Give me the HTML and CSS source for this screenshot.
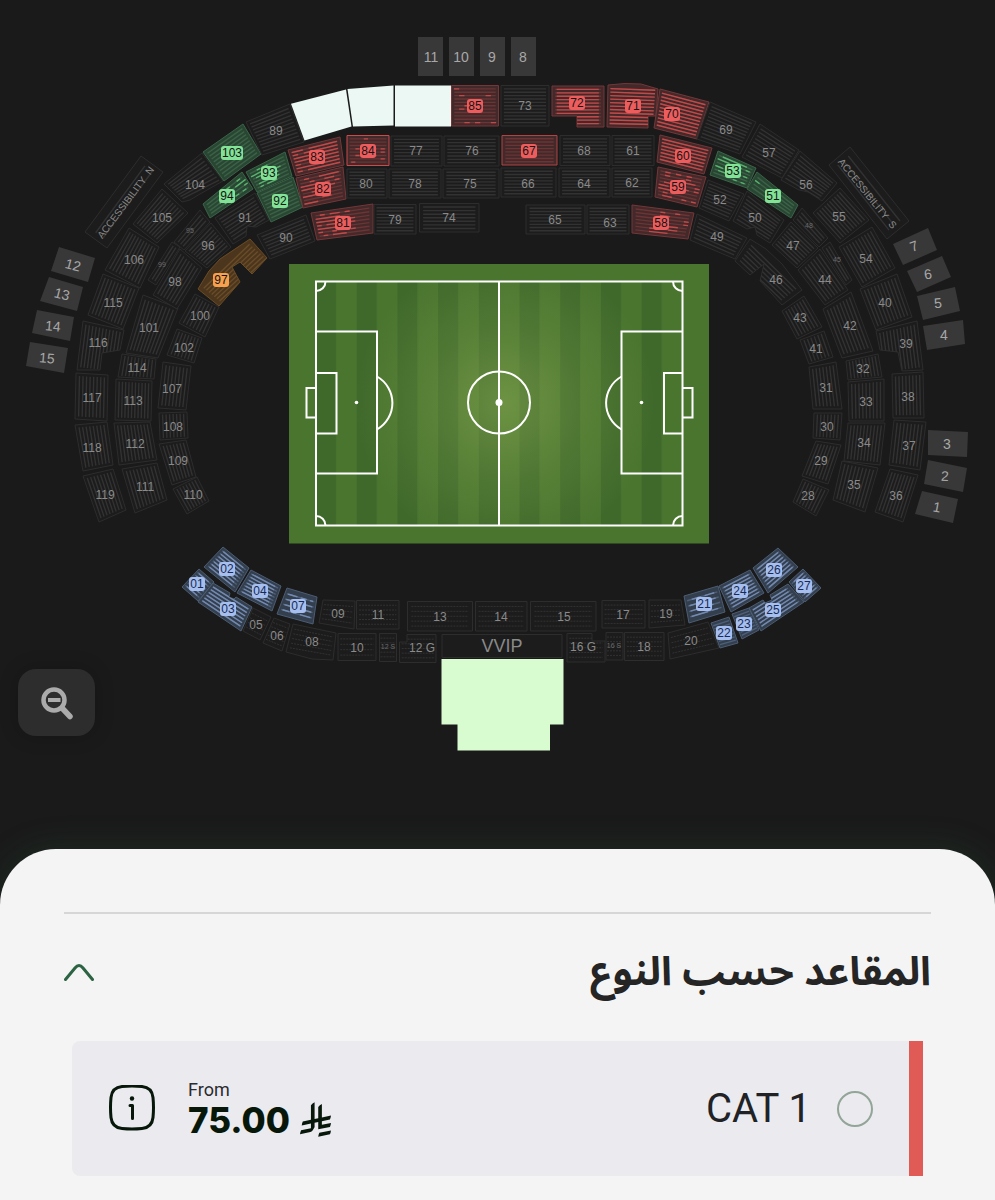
FILE: index.html
```html
<!DOCTYPE html>
<html lang="ar" dir="rtl">
<head>
  <meta charset="UTF-8" />
  <meta name="viewport" content="width=device-width, initial-scale=1.0"/>
  <title>المقاعد حسب النوع</title>
  <link rel="stylesheet" href="styles.css">
</head>
<body>
  <main>
    <div class="map-container">
      <svg class="stadium" viewBox="0 0 995 849" direction="ltr">
        <defs>
          <radialGradient id="fieldLight" gradientUnits="userSpaceOnUse" cx="505" cy="403" r="150">
            <stop offset="0" stop-color="#9dba5e" stop-opacity="0.42" />
            <stop offset="0.5" stop-color="#9dba5e" stop-opacity="0.18" />
            <stop offset="1" stop-color="#9dba5e" stop-opacity="0" />
          </radialGradient>
          <pattern id="grass" patternUnits="userSpaceOnUse" x="316" y="281" width="40.7" height="245">
            <rect width="20.35" height="245" fill="#3f692b" />
            <rect x="20.35" width="20.35" height="245" fill="#4a752f" />
          </pattern>
        </defs>

        <!-- pitch -->
        <rect x="289" y="264" width="420" height="279.5" fill="#4a752f" />
        <rect x="316" y="281.5" width="366.5" height="244" fill="url(#grass)" />
        <rect x="316" y="281.5" width="366.5" height="244" fill="url(#fieldLight)" />
        <g class="pitch-lines">
          <rect x="316" y="281.5" width="366.5" height="244" />
          <path d="M499 281.5V525.5" />
          <circle cx="499" cy="402.5" r="31" />
          <path d="M316 331.5H377V473.5H316M316 373H336.5V433.5H316M316 388H306.5V417.5H316" />
          <path d="M682.5 331.5H621.5V473.5H682.5M682.5 373H664V433.5H682.5M682.5 388H692.5V417.5H682.5" />
          <path d="M377 376.5A30.5 30.5 0 0 1 377 429.5M621.5 376.5A30.5 30.5 0 0 0 621.5 429.5" />
          <path d="M325.5 281.5A9.5 9.5 0 0 1 316 291M673 281.5A9.5 9.5 0 0 0 682.5 291M325.5 525.5A9.5 9.5 0 0 0 316 516M673 525.5A9.5 9.5 0 0 1 682.5 516" />
        </g>
        <g fill="#fff">
          <circle cx="499" cy="402.5" r="3.5" />
          <circle cx="356.5" cy="402.5" r="1.8" />
          <circle cx="641.5" cy="402.5" r="1.8" />
        </g>

        <g id="blocks"></g>

        <path class="lounge" d="M441.5 659H563.5V724.5H550V750.5H457.5V724.5H441.5Z" />
      </svg>

      <button class="zoom-button" type="button" aria-label="تصغير">
        <svg width="36" height="36" viewBox="0 0 36 36" fill="none" stroke="#ababab">
          <circle cx="15" cy="15" r="10.5" stroke-width="4.5" />
          <path d="M9 15h12.5" stroke-width="4" />
          <path d="M23.5 23.5l7.5 8" stroke-width="5.5" stroke-linecap="round" />
        </svg>
      </button>
    </div>

    <section class="sheet">
      <hr class="divider">

      <button class="accordion" type="button" aria-expanded="true">
        <span class="accordion-title">المقاعد حسب النوع</span>
        <svg width="30" height="20" viewBox="0 0 30 20" fill="none" stroke="#2c6443" stroke-width="3" stroke-linecap="round" stroke-linejoin="round">
          <path d="M1.5 17.5L11 6q4-5 8 0L28.500 17.5" />
        </svg>
      </button>

      <div class="category">
        <input type="radio" name="category" id="cat1" />
        <label for="cat1">CAT 1</label>

        <div class="price" dir="ltr">
          <div class="price-from">From</div>
          <div class="price-value">
            <span>75.00</span>
            <svg width="31" height="35" viewBox="0 0 1124.14 1256.39" fill="#07180b">
              <path d="M699.62 1113.02c-20.06 44.48-33.32 92.75-38.4 143.37l424.51-90.24c20.06-44.47 33.31-92.75 38.4-143.37l-424.51 90.24Z" />
              <path d="M1085.73 895.8c20.06-44.47 33.32-92.75 38.4-143.37l-330.68 70.33v-135.2l292.27-62.11c20.06-44.47 33.32-92.75 38.4-143.37l-330.68 70.27V66.13c-50.67 28.45-95.67 66.32-132.25 110.99v403.35l-132.25 28.11V0c-50.67 28.44-95.67 66.32-132.25 110.99v525.69l-295.91 62.88c-20.06 44.47-33.33 92.75-38.42 143.37l334.33-71.05v170.26l-358.3 76.14c-20.06 44.47-33.32 92.75-38.4 143.37l375.04-79.7c30.53-6.35 56.77-24.4 73.83-49.24l68.78-101.97c7.14-10.57 11.3-23.29 11.3-36.99v-149.98l132.25-28.11v270.4l424.53-90.28Z" />
            </svg>
          </div>
        </div>

        <button class="info-button" type="button" aria-label="معلومات">
          <svg width="48" height="48" viewBox="0 0 48 48" fill="none" stroke="#07180b" stroke-width="3" stroke-linecap="round" stroke-linejoin="round">
            <path d="M14 1.5Q24 .5 34 1.5Q44 2.5 45 12.500Q46 22.500 45 32.500Q44 42.500 34 43.500Q24 44.500 14 43.500Q4 42.500 3 32.500Q2 22.500 3 12.500Q4 2.500 14 1.500Z" />
            <path d="M22 20.500H24.500V33.500" />
            <circle cx="24" cy="13.500" r="2.200" fill="#07180b" stroke="none" />
          </svg>
        </button>
      </div>
    </section>
  </main>
  <script src="map.js"></script>
</body>
</html>
```

FILE: styles.css
```css
body {
  font-family: Roboto, "DejaVu Sans", sans-serif;
  margin: 0;
  padding: 0;
  background: #1a1a1a;
}

.map-container {
  position: relative;
}

.stadium {
  display: block;
  width: 100%;
  font-family: "Liberation Sans", Arial, sans-serif;
}

.pitch-lines {
  fill: none;
  stroke: #fff;
  stroke-width: 2;
}

.lounge {
  fill: #d9fbd0;
}

/* seat blocks */
.block polygon {
  fill: #1c1c1c;
  stroke: #2d2d2d;
}

.block .rows {
  stroke: #323232;
  stroke-width: 1.4;
  fill: none;
}

.block .seats {
  fill: none;
  stroke: none;
  stroke-width: 1.4;
}

.block text {
  font-size: 12px;
  fill: #8a8a8a;
  text-anchor: middle;
  white-space: pre;
}

.block .text-tiny {
  font-size: 7px;
  fill: #6c6c6c;
}

.block .text-gate {
  font-size: 14px;
  fill: #a8a8a8;
}

.block .text-vvip {
  font-size: 18px;
}

.block .text-side {
  font-size: 10px;
}

.dotted .rows {
  stroke-dasharray: 2 1;
  stroke-width: 1;
}

.gate polygon {
  fill: #383838;
  stroke: none;
}

.blank polygon {
  fill: #ebf8f4;
  stroke: none;
}

.red polygon {
  fill: #43292a;
  stroke: #753638;
}

.red .rows {
  stroke: #6b3435;
}

.red .seats {
  stroke: #c04a4a;
}

.red .tag {
  fill: #ee5d5e;
}

.green polygon {
  fill: #294633;
  stroke: #3a6448;
}

.green .rows {
  stroke: #3b6147;
}

.green .seats {
  stroke: #58b16d;
}

.green .tag {
  fill: #82e397;
}

.orange polygon {
  fill: #4b361d;
  stroke: #6c4c25;
}

.orange .rows {
  stroke: #694c28;
}

.orange .tag {
  fill: #f8a04d;
}

.blue polygon {
  fill: #343f4e;
  stroke: #4b5c74;
}

.blue .rows {
  stroke: #4d5f79;
}

.blue .seats {
  stroke: #7389b0;
}

.blue .tag {
  fill: #a6bfef;
}

.block .tag + text {
  fill: #151515;
}

.blue .tag + text {
  fill: #182b55;
}

.zoom-button {
  position: absolute;
  left: 18px;
  bottom: 113px;
  display: flex;
  align-items: center;
  justify-content: center;
  width: 77px;
  height: 67px;
  padding: 0;
  border: none;
  border-radius: 18px;
  background: #2d2d2d;
  box-shadow: 0 0 20px rgba(0, 0, 0, 0.2);
  cursor: pointer;
}

/* bottom sheet */
.sheet {
  position: relative;
  padding: 63px 64px 24px;
  background: #f4f4f4;
  border-radius: 56px 56px 0 0;
  box-shadow: 0 0 32px rgba(40, 90, 60, 0.3);
}

.divider {
  height: 2px;
  margin: 0;
  border: none;
  background: #d6d6d6;
}

.accordion {
  display: flex;
  align-items: center;
  justify-content: space-between;
  width: 100%;
  height: 60px;
  margin: 28px 0 39px;
  padding: 0;
  border: none;
  background: none;
  color: #252525;
  cursor: pointer;
}

.accordion-title {
  font-family: "Noto Sans Arabic", "DejaVu Sans", sans-serif;
  font-size: 40px;
  font-weight: bold;
}

.category {
  display: flex;
  align-items: center;
  height: 135px;
  margin: 0 8px;
  padding: 0 36px;
  border-right: 14px solid #e05a56;
  border-radius: 8px 0 0 8px;
  background: #eaeaef;
}

.category input {
  appearance: none;
  width: 36px;
  height: 36px;
  margin: 0 0 0 26px;
  border: 2px solid #92a597;
  border-radius: 50%;
}

.category input:checked {
  background: #2c6443;
}

.category label {
  font-size: 40px;
  color: #202225;
}

.price {
  margin-right: auto;
  width: 144px;
  color: #07180b;
}

.price-from {
  font-size: 18px;
  line-height: 22px;
  color: #2b2b30;
}

.price-value {
  display: flex;
  align-items: center;
  gap: 10px;
  font-family: Inter, sans-serif;
  font-size: 35px;
  font-weight: 800;
  line-height: 38px;
}

.info-button {
  display: flex;
  margin-right: 32px;
  padding: 0;
  border: none;
  background: none;
  cursor: pointer;
}
```

FILE: map.js
```js
const SVG = "http://www.w3.org/2000/svg";

// rectangle as four corners
function box(x1, y1, x2, y2) {
  return [x1, y1, x2, y1, x2, y2, x1, y2];
}

// [label, label x, label y, class, corners, options]
// seat rows run parallel to the first two corners
const blocks = [
  ["11", 431, 57, "gate", box(418, 37, 443, 76)],
  ["10", 461, 57, "gate", box(449, 37, 474, 76)],
  ["9", 492, 57, "gate", box(480, 37, 505, 76)],
  ["8", 523, 57, "gate", box(511, 37, 536, 76)],
  ["12", 73, 265, "gate", [59, 247, 95, 258, 88, 282, 51, 271], { turn: 15 }],
  ["13", 62, 294, "gate", [49, 277, 83, 287, 77, 311, 40, 301], { turn: 14 }],
  ["14", 53, 326, "gate", [37, 310, 74, 317, 70, 341, 32, 333], { turn: 5 }],
  ["15", 47, 358, "gate", [30, 342, 68, 348, 64, 373, 26, 366], { turn: 5 }],
  ["7", 914, 246, "gate", [893, 244, 928, 228, 937, 250, 903, 265], { turn: -20 }],
  ["6", 928, 274, "gate", [907, 271, 942, 256, 951, 277, 917, 292], { turn: -8 }],
  ["5", 938, 303, "gate", [917, 296, 955, 287, 960, 311, 923, 320], { turn: -5 }],
  ["4", 944, 335, "gate", [923, 326, 963, 320, 965, 344, 927, 350]],
  ["3", 947, 444, "gate", [928, 430, 968, 432, 967, 457, 928, 455]],
  ["2", 945, 476, "gate", [928, 460, 967, 468, 963, 492, 924, 484], { turn: 3 }],
  ["1", 937, 507, "gate", [922, 491, 958, 499, 953, 523, 915, 514], { turn: 10 }],

  // outer ring, left to right
  ["119", 105, 495, "", [99, 522, 83, 476, 113, 469, 126, 510]],
  ["118", 92, 448, "", [83, 471, 75, 425, 107, 422, 113, 465]],
  ["117", 92, 398, "", [75, 419, 76, 373, 108, 375, 107, 421]],
  ["116", 98, 343, "", [77, 370, 83, 321, 124, 330, 117, 374], { shape: [77, 370, 83, 321, 124, 330, 120, 350, 102, 353, 100, 370] }],
  ["115", 113, 303, "", [88, 315, 103, 274, 139, 288, 123, 329]],
  ["106", 134, 260, "", [105, 270, 129, 228, 159, 247, 140, 288]],
  ["105", 162, 218, "", [133, 224, 162, 189, 188, 213, 157, 243]],
  ["104", 195, 185, "", [164, 184, 202, 153, 224, 182, 182, 202], { shape: [164, 184, 202, 153, 223, 181, 200, 194, 190, 200, 182, 202] }],
  ["103", 232, 153, "green", [203, 152, 243, 124, 261, 154, 224, 181]],
  ["89", 276, 131, "", [246, 122, 290, 104, 304, 142, 262, 155]],
  ["", 0, 0, "blank", [291, 103.7, 346, 89.5, 351.5, 126.5, 304.5, 140.5]],
  ["", 0, 0, "blank", [347.5, 89, 393.5, 85.5, 393.5, 125.5, 353, 126.5]],
  ["", 0, 0, "blank", box(395, 85.5, 451, 126.5)],
  ["85", 475, 106, "red", box(451.5, 85.5, 498.5, 126), { seats: [0.05, 0.95], fill: 0.15 }],
  ["73", 525, 106, "", box(501, 85.5, 549, 126)],
  ["72", 577, 103, "red", box(552, 86, 604, 127), { seats: [0.09, 0.9], fill: 1, shape: [552, 86, 604, 86, 604, 127, 577, 127, 577, 116, 552, 116] }],
  ["71", 633, 106, "red", [608, 85, 658, 87, 655, 128, 607, 127], { seats: [0.05, 0.95], fill: 1, shape: [608, 85, 625, 83.5, 641, 84, 658, 89, 656, 116, 648, 116, 648, 128, 607, 127] }],
  ["70", 672, 114, "red", [660, 89, 709, 102, 697, 139, 654, 128], { seats: [0.05, 0.95], fill: 1 }],
  ["69", 726, 130, "", [710, 102, 756, 122, 740, 154, 697, 139]],
  ["57", 769, 153, "", [760, 124, 799, 150, 782, 178, 742, 157]],
  ["56", 806, 185, "", [800, 151, 837, 183, 820, 202, 781, 180], { shape: [800, 151, 837, 183, 822, 201, 808, 192, 799, 190, 781, 180] }],
  ["55", 839, 217, "", [840, 188, 869, 220, 840, 243, 813, 213]],
  ["54", 866, 259, "", [872, 227, 895, 268, 862, 287, 839, 247]],
  ["40", 885, 303, "", [897, 274, 912, 317, 876, 330, 860, 289]],
  ["39", 906, 344, "", [917, 321, 923, 370, 882, 375, 876, 331], { shape: [876, 331, 917, 321, 923, 370, 902, 371, 898, 352, 880, 350] }],
  ["38", 908, 397, "", [923, 372, 924, 418, 893, 418, 892, 374]],
  ["37", 909, 446, "", [926, 422, 920, 470, 889, 465, 894, 420]],
  ["36", 896, 496, "", [918, 475, 903, 522, 875, 512, 890, 469]],

  // upper middle ring
  ["111", 145, 487, "", [135, 513, 122, 469, 157, 463, 167, 500]],
  ["112", 135, 444, "", [119, 465, 114, 423, 150, 422, 157, 460]],
  ["113", 133, 401, "", [115, 420, 116, 379, 152, 381, 151, 421]],
  ["114", 137, 368, "", [118, 377, 122, 354, 156, 359, 154, 379]],
  ["101", 149, 328, "", [126, 353, 143, 295, 178, 308, 158, 358]],
  ["99", 162, 264, "tiny", [148, 280, 172, 242, 180, 247, 156, 285]],
  ["98", 175, 282, "", [153, 295, 180, 249, 202, 268, 177, 309]],
  ["95", 190, 230, "tiny", [174, 242, 200, 210, 210, 222, 184, 250]],
  ["96", 208, 246, "", [185, 251, 211, 223, 231, 247, 207, 268]],
  ["94", 227, 196, "green", [203, 204, 242, 172, 253, 189, 210, 218], { seats: [0.3, 0.98], fill: 0.4 }],
  ["93", 269, 173, "green", [246, 172, 285, 152, 292, 176, 257, 192], { seats: [0.05, 0.8], fill: 0.45 }],
  ["92", 280, 201, "green", [257, 193, 293, 177, 303, 207, 271, 222]],
  ["91", 245, 218, "", [215, 218, 255, 193, 269, 220, 233, 244], { shape: [215, 218, 255, 193, 269, 220, 256, 227, 247, 226, 246, 236, 233, 244] }],
  ["83", 317, 157, "red", [288, 150, 340, 137, 344, 165, 296, 176], { seats: [0.05, 0.93], fill: 0.9 }],
  ["82", 323, 189, "red", [296, 178, 343, 167, 346, 199, 303, 208], { seats: [0.05, 0.9], fill: 0.5 }],
  ["84", 368, 151, "red", box(347, 135.5, 389, 165.5), { seats: [0.1, 0.9], fill: 0.15, edge: "#c94b4c" }],
  ["77", 416, 151, "", box(391, 136, 442, 166)],
  ["76", 472, 151, "", box(444, 136, 499, 166)],
  ["67", 529, 151, "red", box(502, 135.5, 557, 165), { edge: "#b04445" }],
  ["68", 584, 151, "", box(560, 135.5, 610, 165.5)],
  ["61", 633, 151, "", box(612, 135.5, 654, 165.5)],
  ["80", 366, 184, "", box(347, 169, 387, 198)],
  ["78", 415, 184, "", box(389, 169, 441, 198)],
  ["75", 470, 184, "", box(443, 169, 499, 198)],
  ["66", 528, 184, "", box(501, 168, 556, 197)],
  ["64", 584, 184, "", box(559, 168, 610, 197)],
  ["62", 632, 183, "", box(612, 168, 652, 197)],
  ["60", 683, 156, "red", [660, 135, 712, 148, 704, 174, 657, 162], { seats: [0.05, 0.95], fill: 1 }],
  ["59", 678, 187, "red", [658, 167, 706, 177, 697, 207, 655, 197], { seats: [0.05, 0.95], fill: 0.45 }],
  ["53", 733, 171, "green", [718, 151, 756, 168, 747, 188, 710, 175], { seats: [0.05, 0.9], fill: 0.4 }],
  ["51", 773, 196, "green", [757, 172, 798, 205, 791, 218, 747, 189], { seats: [0.05, 0.9], fill: 0.06 }],
  ["52", 720, 200, "", [708, 180, 744, 194, 729, 221, 699, 208]],
  ["50", 755, 218, "", [747, 191, 784, 220, 770, 243, 733, 221], { shape: [747, 191, 784, 220, 770, 243, 757, 235, 755, 227, 747, 229, 733, 221] }],
  ["48", 809, 225, "tiny", [802, 208, 828, 238, 819, 247, 793, 220]],
  ["47", 793, 246, "", [791, 222, 818, 248, 797, 268, 772, 245]],
  ["45", 837, 259, "tiny", [830, 242, 852, 280, 846, 285, 822, 248]],
  ["44", 825, 280, "", [820, 249, 848, 290, 825, 305, 798, 270]],
  ["42", 850, 326, "", [851, 292, 873, 351, 842, 358, 823, 309]],
  ["32", 863, 369, "", [878, 354, 882, 377, 848, 380, 846, 361]],
  ["33", 866, 402, "", [884, 379, 884, 421, 849, 421, 848, 382]],
  ["34", 864, 443, "", [885, 423, 880, 465, 844, 461, 848, 423]],
  ["35", 854, 485, "", [878, 468, 865, 512, 833, 500, 842, 461]],

  // inner ring
  ["110", 193, 495, "", [187, 514, 173, 489, 197, 477, 209, 501]],
  ["109", 178, 461, "", [172, 485, 159, 444, 186, 440, 196, 477]],
  ["108", 173, 427, "", [160, 440, 159, 413, 187, 412, 188, 438]],
  ["107", 172, 389, "", [158, 408, 163, 362, 191, 366, 186, 410]],
  ["102", 184, 348, "", [167, 355, 177, 329, 202, 338, 194, 363]],
  ["100", 200, 316, "", [179, 323, 195, 294, 219, 307, 205, 337]],
  ["97", 221, 280, "orange", [198, 289, 250, 239, 272, 258, 219, 306], { shape: [198, 289, 209, 271, 220, 259, 250, 239, 267, 258, 252, 274, 240, 262, 232, 267, 240, 282, 219, 306] }],
  ["90", 286, 238, "", [257, 235, 306, 215, 315, 241, 270, 259]],
  ["81", 343, 223, "red", [311, 213, 373, 204, 373, 233, 317, 240], { seats: [0.05, 0.7], fill: 0.6 }],
  ["79", 395, 220, "", box(374, 204.5, 416, 234)],
  ["74", 449, 218, "", box(419.5, 203.5, 479, 232)],
  ["65", 555, 220, "", box(526, 205, 585, 234)],
  ["63", 610, 223, "", box(587, 205, 629, 234)],
  ["58", 661, 223, "red", [632, 205, 694, 213, 688, 239, 632, 233], { seats: [0.3, 0.95], fill: 0.4 }],
  ["49", 717, 237, "", [697, 214, 747, 238, 735, 259, 690, 240]],
  ["46", 776, 280, "", [750, 239, 802, 290, 782, 305, 735, 261], { shape: [750, 239, 766, 249, 782, 264, 802, 290, 782, 305, 760, 281, 764, 264, 750, 275, 735, 261] }],
  ["43", 800, 318, "", [804, 296, 822, 327, 797, 339, 782, 311]],
  ["41", 816, 349, "", [824, 331, 833, 357, 809, 364, 800, 340]],
  ["31", 826, 388, "", [836, 362, 842, 409, 813, 409, 809, 367]],
  ["30", 827, 427, "", [842, 413, 840, 440, 813, 438, 814, 413]],
  ["29", 821, 461, "", [841, 445, 828, 484, 802, 476, 816, 441]],
  ["28", 808, 496, "", [829, 490, 816, 516, 793, 502, 803, 479]],

  // main stand
  ["02", 227, 569, "blue", [223, 547, 249, 568, 235, 592, 204, 567], { seats: [0.1, 0.85], fill: 1 }],
  ["01", 197, 584, "blue", [199, 569, 214, 582, 198, 601, 182, 587], { seats: [0.15, 0.8], fill: 1 }],
  ["03", 228, 609, "blue", [213, 583, 252, 607, 241, 631, 198, 602], { seats: [0.05, 0.95], fill: 1, shape: [213, 583, 230, 593, 229, 597, 234, 599, 236, 597, 252, 607, 241, 631, 198, 602] }],
  ["04", 260, 591, "blue", [251, 570, 281, 586, 272, 611, 237, 593], { seats: [0.1, 0.85], fill: 1 }],
  ["07", 298, 606, "blue", [287, 588, 317, 597, 313, 624, 277, 614], { seats: [0.1, 0.9], fill: 0.9, gap: 5 }],
  ["05", 256, 625, "dotted", [253, 608, 271, 617, 260, 640, 243, 631]],
  ["06", 277, 636, "dotted", [274, 618, 290, 624, 282, 651, 263, 643]],
  ["08", 312, 642, "dotted", [293, 624, 336, 633, 333, 660, 286, 652], { shape: [293, 624, 336, 633, 333, 660, 312, 659, 286, 652] }],
  ["09", 338, 614, "dotted", [323, 600, 355, 601, 354, 629, 319, 623]],
  ["11", 378, 615, "dotted", box(356.5, 600.5, 399, 629)],
  ["13", 440, 617, "dotted", box(407.5, 601.5, 472.5, 631)],
  ["14", 501, 617, "dotted", box(475.5, 601.5, 527, 631)],
  ["15", 564, 617, "dotted", box(530.5, 601.5, 596, 631)],
  ["17", 623, 615, "dotted", box(602, 600.5, 645, 628)],
  ["19", 666, 614, "dotted", [649, 600, 681, 600, 685, 625, 649, 628]],
  ["10", 357, 648, "dotted", box(338, 633.5, 376, 660.5)],
  ["12 S", 388, 646, "dotted tiny", box(379.5, 633.5, 396.5, 661.5)],
  ["12 G", 422, 648, "dotted", box(399.5, 634.5, 436, 662.5), { shape: [407, 634.5, 436, 634.5, 436, 662.5, 399.5, 662.5, 399.5, 642, 407, 642] }],
  ["VVIP", 502, 646, "vvip", box(442, 634.5, 562, 657.5)],
  ["16 G", 583, 647, "dotted", box(567, 633.5, 605, 662), { shape: [567, 633.5, 592, 633.5, 592, 641, 605, 641, 605, 662, 567, 662] }],
  ["16 S", 614, 645, "dotted tiny", box(606, 632.5, 623, 660)],
  ["18", 644, 647, "dotted", box(624.5, 632.5, 664, 660.5)],
  ["20", 691, 641, "dotted", [668, 633, 708, 622, 719, 648, 670, 659]],
  ["21", 704, 604, "blue", [684, 596, 718, 586, 725, 612, 689, 623], { seats: [0.1, 0.85], fill: 0.8, gap: 5 }],
  ["24", 740, 591, "blue", [719, 586, 750, 570, 764, 593, 731, 612], { seats: [0.1, 0.9], fill: 1 }],
  ["26", 774, 570, "blue", [753, 568, 778, 548, 798, 567, 768, 593], { seats: [0.1, 0.9], fill: 1 }],
  ["27", 804, 586, "blue", [789, 582, 803, 569, 821, 588, 805, 602], { seats: [0.2, 0.85], fill: 1 }],
  ["25", 773, 610, "blue", [749, 608, 788, 584, 804, 602, 761, 631], { seats: [0.05, 0.9], fill: 1, shape: [749, 608, 763, 600, 765, 603, 772, 600, 770, 595, 788, 584, 804, 602, 761, 631] }],
  ["22", 724, 633, "blue", [711, 623, 729, 617, 738, 643, 720, 648]],
  ["23", 744, 624, "blue", [732, 614, 749, 608, 759, 630, 742, 639]],

  ["ACCESSIBILITY  N", 125, 202, "side", [85, 232, 141, 156, 163, 172, 107, 248], { turn: -53, gap: 8 }],
  ["ACCESSIBILITY  S", 868, 193, "side", [850, 147, 909, 221, 887, 239, 829, 165], { turn: 51, gap: 8 }],
];

function add(parent, name, attrs) {
  const el = document.createElementNS(SVG, name);
  for (const key in attrs) {
    el.setAttribute(key, attrs[key]);
  }
  parent.appendChild(el);
  return el;
}

// small repeatable random generator, so the seats never jump between loads
let seed = 7;
function random() {
  seed = (seed * 16807) % 2147483647;
  return seed / 2147483647;
}

// straight lines between the two sides of a block, from..to along each row
// fill is the share of the row that is drawn
function rowPath(c, gap, from, to, fill) {
  const depth = Math.hypot(c[6] + c[4] - c[0] - c[2], c[7] + c[5] - c[1] - c[3]) / 2;
  const count = Math.max(2, Math.round(depth / gap));
  let d = "";
  for (let i = 1; i < count; i++) {
    const t = i / count;
    const ax = c[0] + (c[6] - c[0]) * t;
    const ay = c[1] + (c[7] - c[1]) * t;
    const bx = c[2] + (c[4] - c[2]) * t;
    const by = c[3] + (c[5] - c[3]) * t;
    const pieces = fill < 1 ? 8 : 1;
    const step = (to - from) / pieces;
    for (let p = 0; p < pieces; p++) {
      if (fill < 1 && random() > fill) {
        continue;
      }
      const s = from + step * p;
      const e = s + step;
      d += `M${ax + (bx - ax) * s} ${ay + (by - ay) * s}L${ax + (bx - ax) * e} ${ay + (by - ay) * e}`;
    }
  }
  return d;
}

function drawBlock(block, index) {
  const [label, x, y, type, corners, options = {}] = block;
  const outline = options.shape || corners;
  const g = add(document.getElementById("blocks"), "g", { class: "block " + type });

  const polygon = add(g, "polygon", { points: outline.join(" ") });
  if (options.edge) {
    polygon.style.stroke = options.edge;
  }

  if (!["gate", "blank", "vvip"].includes(type)) {
    const clip = add(g, "clipPath", { id: "clip" + index });
    add(clip, "polygon", { points: outline.join(" ") });
    const clipUrl = `url(#clip${index})`;
    const gap = options.gap || (type.includes("dotted") ? 5 : 3.4);
    add(g, "path", { class: "rows", d: rowPath(corners, gap, 0.06, 0.94, 1), "clip-path": clipUrl });
    if (options.seats) {
      const [from, to] = options.seats;
      add(g, "path", { class: "seats", d: rowPath(corners, gap, from, to, options.fill), "clip-path": clipUrl });
    }
  }

  if (!label) {
    return;
  }

  if (/red|green|blue|orange/.test(type)) {
    const width = label.length * 6 + 4;
    add(g, "rect", { class: "tag", x: x - width / 2, y: y - 7, width: width, height: 14, rx: 3 });
  }

  const sizes = { gate: "text-gate", vvip: "text-vvip", side: "text-side" };
  const shift = { gate: 5, vvip: 6 }[type] || (type.includes("tiny") ? 2.5 : 4.3);
  const text = add(g, "text", { x: x, y: y + shift });
  if (type.includes("tiny")) {
    text.setAttribute("class", "text-tiny");
  } else if (sizes[type]) {
    text.setAttribute("class", sizes[type]);
  }
  if (options.turn) {
    text.setAttribute("transform", `rotate(${options.turn} ${x} ${y})`);
  }
  text.textContent = label;
}

blocks.forEach(drawBlock);
```
